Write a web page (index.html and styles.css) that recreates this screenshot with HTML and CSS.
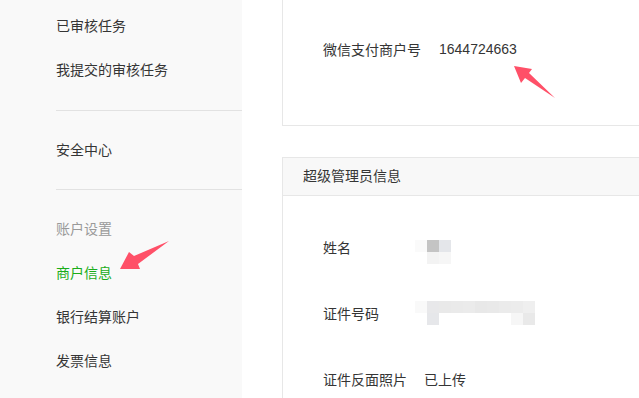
FILE: index.html
```html
<!DOCTYPE html>
<html lang="zh-CN">
<head>
    <meta charset="UTF-8">
    <title>商户信息</title>
    <link rel="stylesheet" href="styles.css">
</head>
<body>
    <div id="page">
        <div id="sidebar">
            <div class="menu-group first">
                <div class="menu-item">已审核任务</div>
                <div class="menu-item">我提交的审核任务</div>
            </div>
            <div class="menu-group">
                <div class="menu-item">安全中心</div>
            </div>
            <div class="menu-group">
                <div class="menu-item title">账户设置</div>
                <div class="menu-item active">商户信息</div>
                <div class="menu-item">银行结算账户</div>
                <div class="menu-item">发票信息</div>
            </div>
        </div>

        <div id="main">
            <div class="card card-top">
                <div class="row">
                    <span class="label wide">微信支付商户号</span>
                    <span class="value">1644724663</span>
                </div>
            </div>

            <div class="card card-admin">
                <div class="card-head">超级管理员信息</div>
                <div class="card-body">
                    <div class="row">
                        <span class="label">姓名</span>
                        <span class="blur blur-name">
                            <i style="background:#fafafa"></i><i style="background:#c4c4c4"></i><i style="background:#e4e6ea"></i>
                            <i style="background:#fff"></i><i style="background:#f3f3f3"></i><i style="background:#f6f6f6"></i>
                        </span>
                    </div>
                    <div class="row">
                        <span class="label">证件号码</span>
                        <span class="blur blur-id">
                            <i style="background:#f9f9f9"></i><i style="background:#e8e8ea"></i><i style="background:#e9e9e9"></i><i style="background:#eaeaea"></i><i style="background:#ebebeb"></i><i style="background:#e8e8e8"></i><i style="background:#e9e9e9"></i><i style="background:#ebebeb"></i><i style="background:#ececec"></i><i style="background:#efefef"></i>
                            <i style="background:#fff"></i><i style="background:#e6e7ea"></i><i style="background:#fff"></i><i style="background:#fff"></i><i style="background:#fff"></i><i style="background:#fff"></i><i style="background:#fff"></i><i style="background:#fff"></i><i style="background:#f6f6f6"></i><i style="background:#e9e9e9"></i>
                        </span>
                    </div>
                    <div class="row">
                        <span class="label">证件反面照片</span>
                        <span class="value">已上传</span>
                    </div>
                </div>
            </div>
        </div>
    </div>

    <svg class="arrow" width="639" height="398" viewBox="0 0 639 398">
        <polygon points="120,269 129,252 134,256 169,241 138,264 140,269" fill="#ff5068"/>
        <polygon points="514,66 532,69 529,73 555,98 525,78 521,83" fill="#ff5068"/>
    </svg>
</body>
</html>
```

FILE: styles.css
```css
html, body {
    margin: 0;
    padding: 0;
    height: 398px;
    overflow: hidden;
    background: #fff;
    font-family: "Liberation Sans", "Noto Sans CJK SC", sans-serif;
    font-size: 14px;
    color: #353535;
}

#page {
    display: flex;
    height: 398px;
}

#sidebar {
    width: 186px;
    flex-shrink: 0;
    padding-left: 56px;
    background: #f9f9f9;
}

.menu-group {
    padding: 17px 0;
    border-top: 1px solid #e2e2e2;
}

.menu-group.first {
    padding-top: 4px;
    padding-bottom: 18px;
    border-top: none;
}

.menu-item {
    height: 44px;
    line-height: 44px;
    white-space: nowrap;
}

.menu-item.title {
    color: #9a9a9a;
}

.menu-item.active {
    color: #1aad19;
}

#main {
    flex: 1;
    min-width: 0;
    padding-left: 40px;
}

/* right edge is cut off by the window */
.card {
    border: 1px solid #e7e7e7;
    border-right: none;
}

.card-top {
    margin-top: -7px;
    padding: 22px 40px 43px;
}

.card-admin {
    margin-top: 31px;
}

.card-head {
    height: 37px;
    line-height: 37px;
    padding-left: 20px;
    background: #f8f8f8;
    border-bottom: 1px solid #e7e7e7;
}

.card-body {
    padding: 18px 40px 0;
}

.row {
    display: flex;
    align-items: center;
    height: 66px;
    white-space: nowrap;
}

.label {
    width: 101px;
    flex-shrink: 0;
}

.label.wide {
    width: 116px;
}

.blur {
    display: grid;
    grid-auto-rows: 12px;
    margin-left: -9px;
}

.blur i {
    display: block;
    width: 12px;
    height: 12px;
}

.blur-name {
    grid-template-columns: repeat(3, 12px);
    margin-top: 10px;
}

.blur-id {
    grid-template-columns: repeat(10, 12px);
}

.arrow {
    position: absolute;
    left: 0;
    top: 0;
    pointer-events: none;
}
```
